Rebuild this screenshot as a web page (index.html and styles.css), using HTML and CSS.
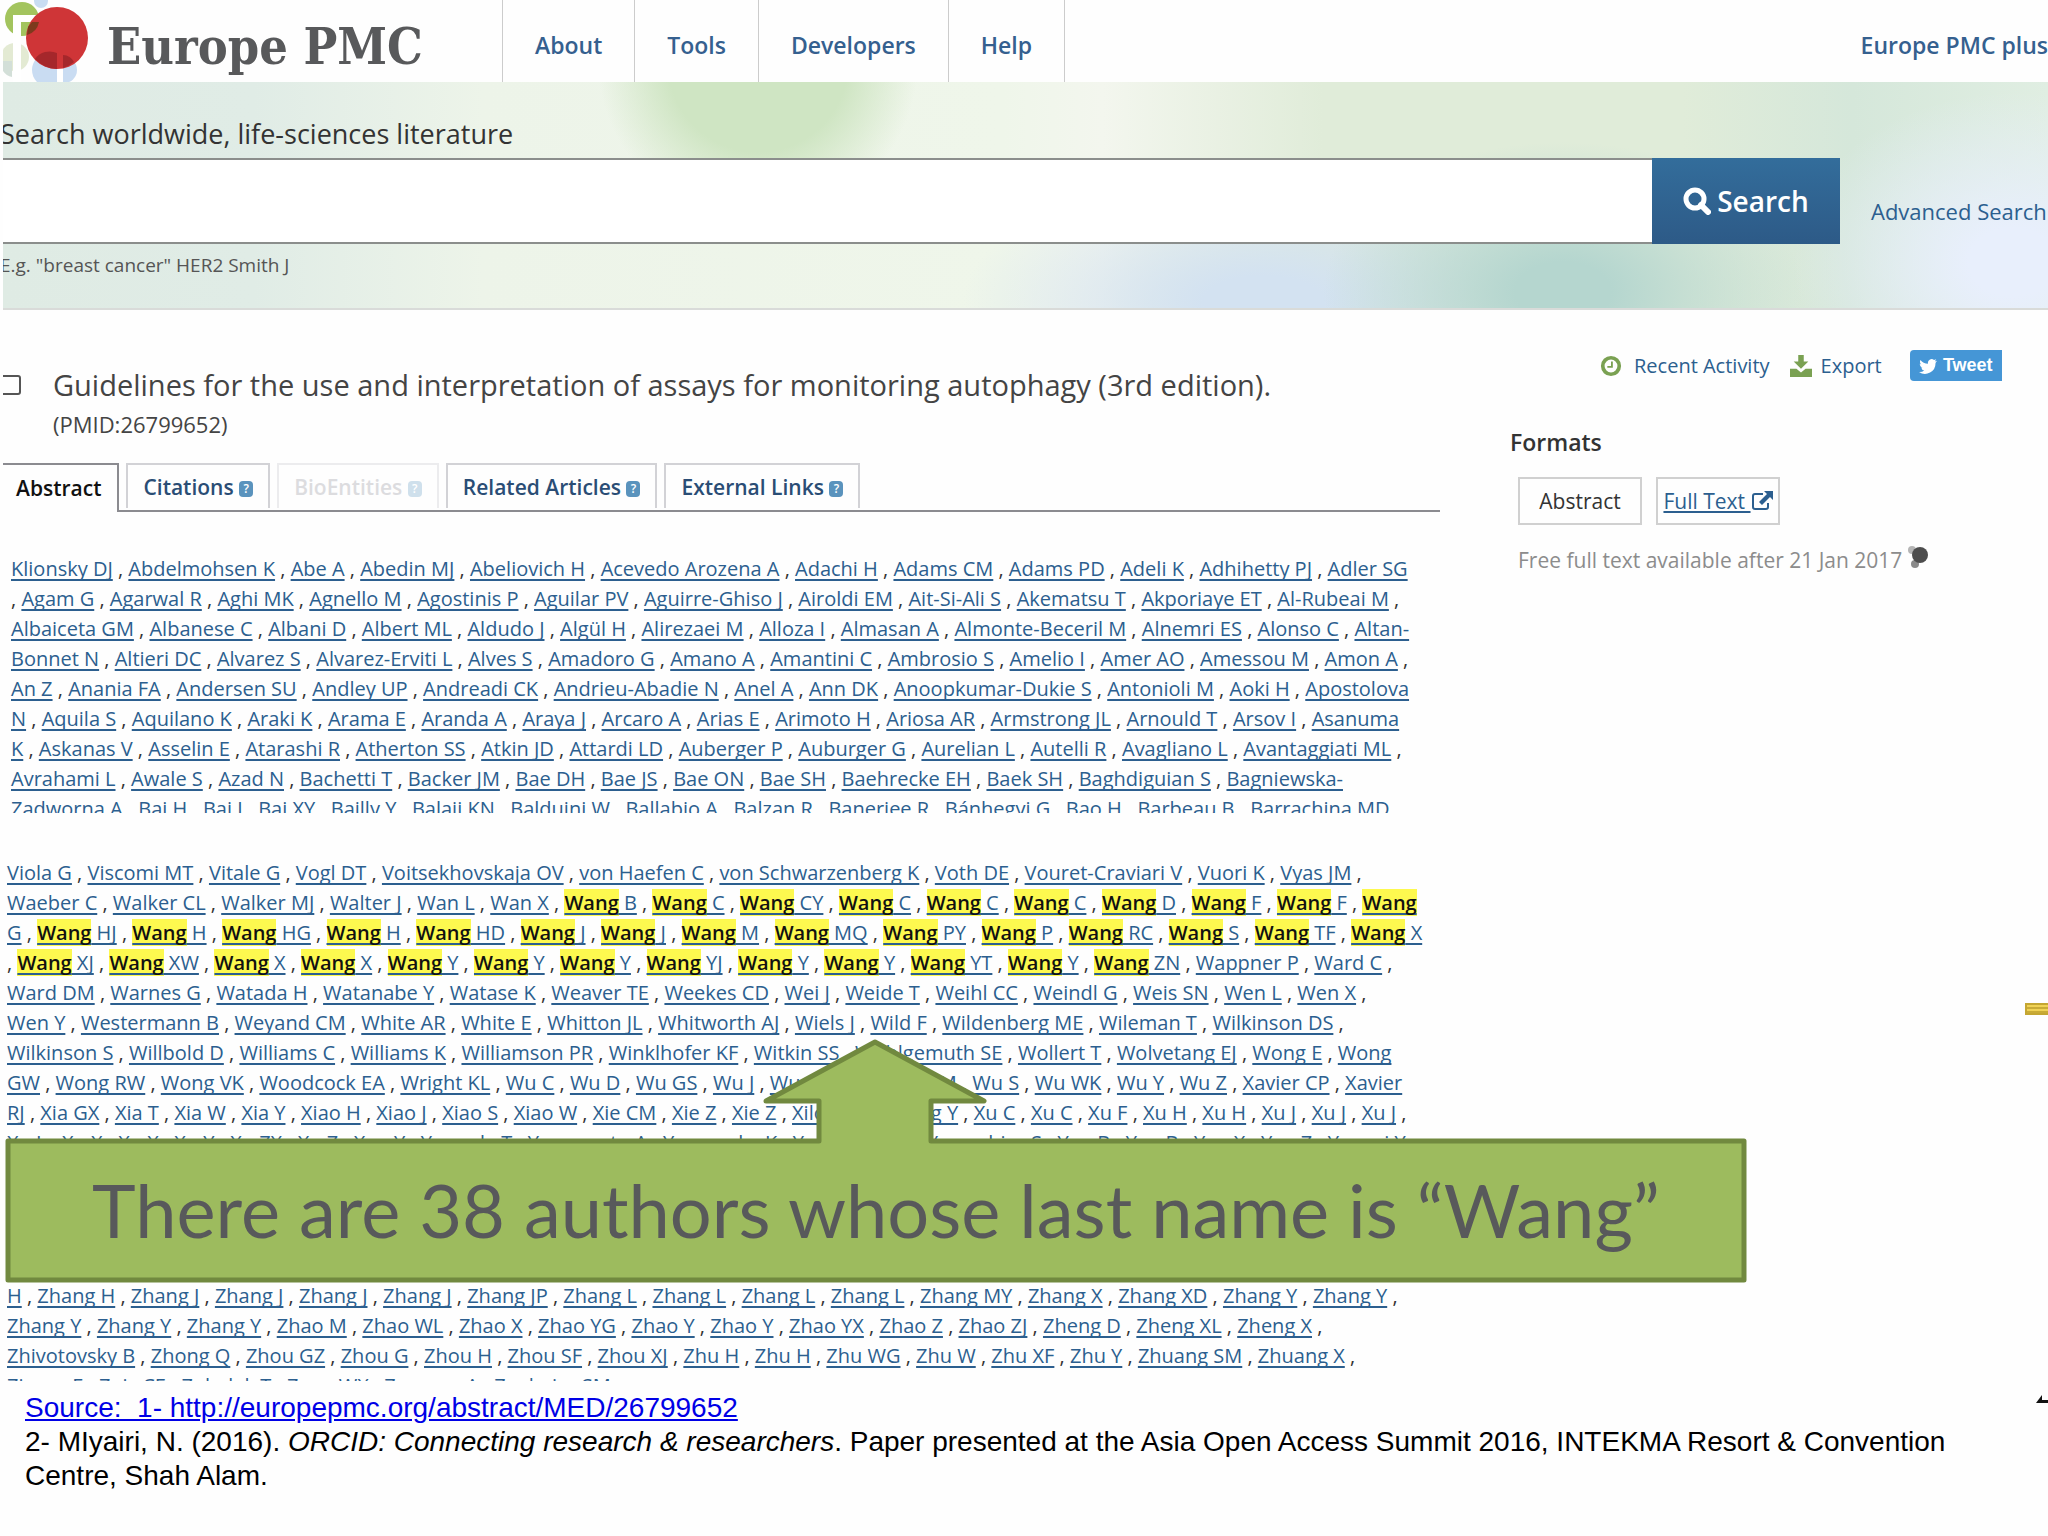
FILE: index.html
```html
<!DOCTYPE html>
<html lang="en">
<head>
  <meta charset="UTF-8">
  <meta name="viewport" content="width=device-width, initial-scale=1.0">
  <link rel="stylesheet" href="styles.css">
  <title>Europe PMC</title>
</head>
<body>
  <header class="topbar">
    <a class="brand" href="#">
      <svg class="logo" viewBox="0 0 88 82" aria-hidden="true">
        <circle cx="38" cy="1" r="7" fill="#c9ddf2"/>
        <circle cx="19" cy="19" r="17" fill="#a3c45e"/>
        <circle cx="12" cy="57" r="14" fill="#e3ead3"/>
        <path d="M0 61h9v16a14 14 0 0 1-9-6z" fill="#d3dfd8"/>
        <circle cx="46" cy="70" r="17" fill="#c9dcf2"/>
        <circle cx="61" cy="70" r="13" fill="#c9dcf2"/>
        <path d="M10 15h26v7H18v60h-8z" fill="#fff"/>
        <path d="M54 50h6v32h-6z" fill="#fff"/>
        <circle cx="54" cy="38" r="31" fill="#cf3537"/>
        <path d="M25 27l4-5h7a17 17 0 0 1-12 13z" fill="#7d3a1d"/>
        <path d="M32 59a18 18 0 0 1 22-6v16a31 31 0 0 1-22-10z" fill="#a5272b"/>
        <path d="M60 55a13 13 0 0 1 11 7 31 31 0 0 1-11 6z" fill="#a5272b"/>
      </svg>
      <span class="brand-name">Europe PMC</span>
    </a>
    <nav class="menu">
      <a href="#">About</a>
      <a href="#">Tools</a>
      <a href="#">Developers</a>
      <a href="#">Help</a>
    </nav>
    <a class="plus" href="#">Europe PMC plus</a>
  </header>

  <section class="banner">
    <form class="search">
      <label for="query">Search worldwide, life-sciences literature</label>
      <div class="search-row">
        <input type="text" id="query">
        <button type="submit">
          <svg viewBox="0 0 28 28" aria-hidden="true">
            <circle cx="12" cy="12" r="9" fill="none" stroke="#fff" stroke-width="5"/>
            <path d="M18 18l7 7" stroke="#fff" stroke-width="6" stroke-linecap="round"/>
          </svg>
          Search
        </button>
        <a href="#">Advanced Search</a>
      </div>
      <p class="hint">E.g. "breast cancer" HER2 Smith J</p>
    </form>
  </section>

  <main class="record">
    <article>
      <div class="title-row">
        <input type="checkbox" id="pick">
        <div>
          <label class="title" for="pick">Guidelines for the use and interpretation of assays for monitoring autophagy (3rd edition).</label>
          <p class="pmid">(PMID:26799652)</p>
        </div>
      </div>

      <nav class="tabs">
        <a class="tab active" href="#">Abstract</a>
        <a class="tab" href="#">Citations <span class="help">?</span></a>
        <a class="tab disabled" href="#">BioEntities <span class="help">?</span></a>
        <a class="tab" href="#">Related Articles <span class="help">?</span></a>
        <a class="tab" href="#">External Links <span class="help">?</span></a>
      </nav>

      <p class="authors first">
        <a href="#">Klionsky DJ</a> , <a href="#">Abdelmohsen K</a> , <a href="#">Abe A</a> , <a href="#">Abedin MJ</a> , <a href="#">Abeliovich H</a> , <a href="#">Acevedo Arozena A</a> , <a href="#">Adachi H</a> , <a href="#">Adams CM</a> , <a href="#">Adams PD</a> , <a href="#">Adeli K</a> , <a href="#">Adhihetty PJ</a> , <a href="#">Adler SG</a><br>
        , <a href="#">Agam G</a> , <a href="#">Agarwal R</a> , <a href="#">Aghi MK</a> , <a href="#">Agnello M</a> , <a href="#">Agostinis P</a> , <a href="#">Aguilar PV</a> , <a href="#">Aguirre-Ghiso J</a> , <a href="#">Airoldi EM</a> , <a href="#">Ait-Si-Ali S</a> , <a href="#">Akematsu T</a> , <a href="#">Akporiaye ET</a> , <a href="#">Al-Rubeai M</a> ,<br>
        <a href="#">Albaiceta GM</a> , <a href="#">Albanese C</a> , <a href="#">Albani D</a> , <a href="#">Albert ML</a> , <a href="#">Aldudo J</a> , <a href="#">Algül H</a> , <a href="#">Alirezaei M</a> , <a href="#">Alloza I</a> , <a href="#">Almasan A</a> , <a href="#">Almonte-Beceril M</a> , <a href="#">Alnemri ES</a> , <a href="#">Alonso C</a> , <a href="#">Altan-<br>Bonnet N</a> , <a href="#">Altieri DC</a> , <a href="#">Alvarez S</a> , <a href="#">Alvarez-Erviti L</a> , <a href="#">Alves S</a> , <a href="#">Amadoro G</a> , <a href="#">Amano A</a> , <a href="#">Amantini C</a> , <a href="#">Ambrosio S</a> , <a href="#">Amelio I</a> , <a href="#">Amer AO</a> , <a href="#">Amessou M</a> , <a href="#">Amon A</a> ,<br>
        <a href="#">An Z</a> , <a href="#">Anania FA</a> , <a href="#">Andersen SU</a> , <a href="#">Andley UP</a> , <a href="#">Andreadi CK</a> , <a href="#">Andrieu-Abadie N</a> , <a href="#">Anel A</a> , <a href="#">Ann DK</a> , <a href="#">Anoopkumar-Dukie S</a> , <a href="#">Antonioli M</a> , <a href="#">Aoki H</a> , <a href="#">Apostolova<br>N</a> , <a href="#">Aquila S</a> , <a href="#">Aquilano K</a> , <a href="#">Araki K</a> , <a href="#">Arama E</a> , <a href="#">Aranda A</a> , <a href="#">Araya J</a> , <a href="#">Arcaro A</a> , <a href="#">Arias E</a> , <a href="#">Arimoto H</a> , <a href="#">Ariosa AR</a> , <a href="#">Armstrong JL</a> , <a href="#">Arnould T</a> , <a href="#">Arsov I</a> , <a href="#">Asanuma<br>K</a> , <a href="#">Askanas V</a> , <a href="#">Asselin E</a> , <a href="#">Atarashi R</a> , <a href="#">Atherton SS</a> , <a href="#">Atkin JD</a> , <a href="#">Attardi LD</a> , <a href="#">Auberger P</a> , <a href="#">Auburger G</a> , <a href="#">Aurelian L</a> , <a href="#">Autelli R</a> , <a href="#">Avagliano L</a> , <a href="#">Avantaggiati ML</a> ,<br>
        <a href="#">Avrahami L</a> , <a href="#">Awale S</a> , <a href="#">Azad N</a> , <a href="#">Bachetti T</a> , <a href="#">Backer JM</a> , <a href="#">Bae DH</a> , <a href="#">Bae JS</a> , <a href="#">Bae ON</a> , <a href="#">Bae SH</a> , <a href="#">Baehrecke EH</a> , <a href="#">Baek SH</a> , <a href="#">Baghdiguian S</a> , <a href="#">Bagniewska-<br>Zadworna A</a> , <a href="#">Bai H</a> , <a href="#">Bai J</a> , <a href="#">Bai XY</a> , <a href="#">Bailly Y</a> , <a href="#">Balaji KN</a> , <a href="#">Balduini W</a> , <a href="#">Ballabio A</a> , <a href="#">Balzan R</a> , <a href="#">Banerjee R</a> , <a href="#">Bánhegyi G</a> , <a href="#">Bao H</a> , <a href="#">Barbeau B</a> , <a href="#">Barrachina MD</a>
      </p>

      <div class="found">
        <p class="authors middle">
          <a href="#">Viola G</a> , <a href="#">Viscomi MT</a> , <a href="#">Vitale G</a> , <a href="#">Vogl DT</a> , <a href="#">Voitsekhovskaja OV</a> , <a href="#">von Haefen C</a> , <a href="#">von Schwarzenberg K</a> , <a href="#">Voth DE</a> , <a href="#">Vouret-Craviari V</a> , <a href="#">Vuori K</a> , <a href="#">Vyas JM</a> ,<br>
          <a href="#">Waeber C</a> , <a href="#">Walker CL</a> , <a href="#">Walker MJ</a> , <a href="#">Walter J</a> , <a href="#">Wan L</a> , <a href="#">Wan X</a> , <a href="#"><mark>Wang</mark> B</a> , <a href="#"><mark>Wang</mark> C</a> , <a href="#"><mark>Wang</mark> CY</a> , <a href="#"><mark>Wang</mark> C</a> , <a href="#"><mark>Wang</mark> C</a> , <a href="#"><mark>Wang</mark> C</a> , <a href="#"><mark>Wang</mark> D</a> , <a href="#"><mark>Wang</mark> F</a> , <a href="#"><mark>Wang</mark> F</a> , <a href="#"><mark>Wang</mark><br>G</a> , <a href="#"><mark>Wang</mark> HJ</a> , <a href="#"><mark>Wang</mark> H</a> , <a href="#"><mark>Wang</mark> HG</a> , <a href="#"><mark>Wang</mark> H</a> , <a href="#"><mark>Wang</mark> HD</a> , <a href="#"><mark>Wang</mark> J</a> , <a href="#"><mark>Wang</mark> J</a> , <a href="#"><mark>Wang</mark> M</a> , <a href="#"><mark>Wang</mark> MQ</a> , <a href="#"><mark>Wang</mark> PY</a> , <a href="#"><mark>Wang</mark> P</a> , <a href="#"><mark>Wang</mark> RC</a> , <a href="#"><mark>Wang</mark> S</a> , <a href="#"><mark>Wang</mark> TF</a> , <a href="#"><mark>Wang</mark> X</a><br>
          , <a href="#"><mark>Wang</mark> XJ</a> , <a href="#"><mark>Wang</mark> XW</a> , <a href="#"><mark>Wang</mark> X</a> , <a href="#"><mark>Wang</mark> X</a> , <a href="#"><mark>Wang</mark> Y</a> , <a href="#"><mark>Wang</mark> Y</a> , <a href="#"><mark>Wang</mark> Y</a> , <a href="#"><mark>Wang</mark> YJ</a> , <a href="#"><mark>Wang</mark> Y</a> , <a href="#"><mark>Wang</mark> Y</a> , <a href="#"><mark>Wang</mark> YT</a> , <a href="#"><mark>Wang</mark> Y</a> , <a href="#"><mark>Wang</mark> ZN</a> , <a href="#">Wappner P</a> , <a href="#">Ward C</a> ,<br>
          <a href="#">Ward DM</a> , <a href="#">Warnes G</a> , <a href="#">Watada H</a> , <a href="#">Watanabe Y</a> , <a href="#">Watase K</a> , <a href="#">Weaver TE</a> , <a href="#">Weekes CD</a> , <a href="#">Wei J</a> , <a href="#">Weide T</a> , <a href="#">Weihl CC</a> , <a href="#">Weindl G</a> , <a href="#">Weis SN</a> , <a href="#">Wen L</a> , <a href="#">Wen X</a> ,<br>
          <a href="#">Wen Y</a> , <a href="#">Westermann B</a> , <a href="#">Weyand CM</a> , <a href="#">White AR</a> , <a href="#">White E</a> , <a href="#">Whitton JL</a> , <a href="#">Whitworth AJ</a> , <a href="#">Wiels J</a> , <a href="#">Wild F</a> , <a href="#">Wildenberg ME</a> , <a href="#">Wileman T</a> , <a href="#">Wilkinson DS</a> ,<br>
          <a href="#">Wilkinson S</a> , <a href="#">Willbold D</a> , <a href="#">Williams C</a> , <a href="#">Williams K</a> , <a href="#">Williamson PR</a> , <a href="#">Winklhofer KF</a> , <a href="#">Witkin SS</a> , <a href="#">Wohlgemuth SE</a> , <a href="#">Wollert T</a> , <a href="#">Wolvetang EJ</a> , <a href="#">Wong E</a> , <a href="#">Wong<br>GW</a> , <a href="#">Wong RW</a> , <a href="#">Wong VK</a> , <a href="#">Woodcock EA</a> , <a href="#">Wright KL</a> , <a href="#">Wu C</a> , <a href="#">Wu D</a> , <a href="#">Wu GS</a> , <a href="#">Wu J</a> , <a href="#">Wu J</a> , <a href="#">Wu KK</a> , <a href="#">Wu M</a> , <a href="#">Wu S</a> , <a href="#">Wu WK</a> , <a href="#">Wu Y</a> , <a href="#">Wu Z</a> , <a href="#">Xavier CP</a> , <a href="#">Xavier<br>RJ</a> , <a href="#">Xia GX</a> , <a href="#">Xia T</a> , <a href="#">Xia W</a> , <a href="#">Xia Y</a> , <a href="#">Xiao H</a> , <a href="#">Xiao J</a> , <a href="#">Xiao S</a> , <a href="#">Xiao W</a> , <a href="#">Xie CM</a> , <a href="#">Xie Z</a> , <a href="#">Xie Z</a> , <a href="#">Xilouri M</a> , <a href="#">Xiong Y</a> , <a href="#">Xu C</a> , <a href="#">Xu C</a> , <a href="#">Xu F</a> , <a href="#">Xu H</a> , <a href="#">Xu H</a> , <a href="#">Xu J</a> , <a href="#">Xu J</a> , <a href="#">Xu J</a> ,<br>
          <a href="#">Xu L</a> , <a href="#">Xu X</a> , <a href="#">Xu X</a> , <a href="#">Xu Y</a> , <a href="#">Xu ZX</a> , <a href="#">Xu Z</a> , <a href="#">Xue Y</a> , <a href="#">Yamada T</a> , <a href="#">Yamamoto A</a> , <a href="#">Yamanaka K</a> , <a href="#">Yamashina S</a> , <a href="#">Yamashiro S</a> , <a href="#">Yan B</a> , <a href="#">Yan B</a> , <a href="#">Yan X</a> , <a href="#">Yen Z</a> , <a href="#">Yanagi Y</a>
        </p>

        <div class="callout">
          <svg viewBox="0 0 1742 244" preserveAspectRatio="none" aria-hidden="true">
            <path d="M3 102H814V62H761L870 3L979 62H926V102H1739V241H3Z"/>
          </svg>
          <p>There are 38 authors whose last name is “Wang”</p>
        </div>
      </div>

      <p class="authors last">
        <a href="#">H</a> , <a href="#">Zhang H</a> , <a href="#">Zhang J</a> , <a href="#">Zhang J</a> , <a href="#">Zhang J</a> , <a href="#">Zhang J</a> , <a href="#">Zhang JP</a> , <a href="#">Zhang L</a> , <a href="#">Zhang L</a> , <a href="#">Zhang L</a> , <a href="#">Zhang L</a> , <a href="#">Zhang MY</a> , <a href="#">Zhang X</a> , <a href="#">Zhang XD</a> , <a href="#">Zhang Y</a> , <a href="#">Zhang Y</a> ,<br>
        <a href="#">Zhang Y</a> , <a href="#">Zhang Y</a> , <a href="#">Zhang Y</a> , <a href="#">Zhao M</a> , <a href="#">Zhao WL</a> , <a href="#">Zhao X</a> , <a href="#">Zhao YG</a> , <a href="#">Zhao Y</a> , <a href="#">Zhao Y</a> , <a href="#">Zhao YX</a> , <a href="#">Zhao Z</a> , <a href="#">Zhao ZJ</a> , <a href="#">Zheng D</a> , <a href="#">Zheng XL</a> , <a href="#">Zheng X</a> ,<br>
        <a href="#">Zhivotovsky B</a> , <a href="#">Zhong Q</a> , <a href="#">Zhou GZ</a> , <a href="#">Zhou G</a> , <a href="#">Zhou H</a> , <a href="#">Zhou SF</a> , <a href="#">Zhou XJ</a> , <a href="#">Zhu H</a> , <a href="#">Zhu H</a> , <a href="#">Zhu WG</a> , <a href="#">Zhu W</a> , <a href="#">Zhu XF</a> , <a href="#">Zhu Y</a> , <a href="#">Zhuang SM</a> , <a href="#">Zhuang X</a> ,<br>
        <a href="#">Ziparo E</a> , <a href="#">Zois CE</a> , <a href="#">Zoladek T</a> , <a href="#">Zong WX</a> , <a href="#">Zorzano A</a> , <a href="#">Zughaier SM</a>
      </p>
    </article>

    <aside>
      <div class="actions">
        <a href="#">
          <svg viewBox="0 0 24 24" aria-hidden="true">
            <circle cx="12" cy="12" r="9" fill="none" stroke="#7aa152" stroke-width="4"/>
            <path d="M13 7v6H8" fill="none" stroke="#7aa152" stroke-width="2"/>
          </svg>
          <span>Recent Activity</span>
        </a>
        <a class="export" href="#">
          <svg viewBox="0 0 24 24" aria-hidden="true">
            <path d="M9 0h6v7h5l-8 8-8-8h5z" fill="#7aa152"/>
            <path d="M0 15h7l5 4 5-4h7v9H0z" fill="#7aa152"/>
          </svg>
          <span>Export</span>
        </a>
        <button class="tweet" type="button">
          <svg viewBox="0 0 24 24" aria-hidden="true">
            <path d="M24 5l-3 1 2-3-3 1a5 5 0 0 0-8 5C8 9 4 7 2 4a5 5 0 0 0 1 6l-2-1c0 3 2 5 4 5H3a5 5 0 0 0 4 4 10 10 0 0 1-7 2 14 14 0 0 0 22-12z" fill="#fff"/>
          </svg>
          Tweet
        </button>
      </div>

      <h2>Formats</h2>
      <div class="formats">
        <a class="format current" href="#">Abstract</a>
        <a class="format" href="#"><span>Full Text </span><svg viewBox="0 0 22 20" aria-hidden="true">
          <path d="M12 3H4Q2 3 2 5v11q0 2 2 2h11q2 0 2-2v-4" fill="none" stroke="#2c5f8f" stroke-width="2"/>
          <path d="M13 0h9v9l-3-3-8 8-3-3 8-8z" fill="#2c5f8f"/>
        </svg></a>
      </div>
      <p class="note">
        Free full text available after 21 Jan 2017
        <svg viewBox="0 0 20 22" aria-hidden="true">
          <circle cx="4" cy="4" r="4" fill="#b5b5b5"/>
          <circle cx="7" cy="18" r="4" fill="#8a8a8a"/>
          <circle cx="12" cy="9" r="8" fill="#4d4d4d"/>
        </svg>
      </p>
    </aside>
  </main>

  <footer class="sources">
    <a href="#">Source:&nbsp; 1- http://europepmc.org/abstract/MED/26799652</a>
    <p>2- MIyairi, N. (2016). <em>ORCID: Connecting research &amp; researchers</em>. Paper presented at the Asia Open Access Summit 2016, INTEKMA Resort &amp; Convention Centre, Shah Alam.</p>
  </footer>

  <div class="edge-bar"></div>
  <svg class="edge-mark" viewBox="0 0 12 8" aria-hidden="true">
    <path d="M0 8l3-4 3-4v5h6v3z" fill="#111"/>
  </svg>
</body>
</html>
```
FILE: styles.css
```css
* {
  box-sizing: border-box;
}

body {
  position: relative;
  margin: 0;
  min-height: 100vh;
  overflow-x: hidden;
  background-color: #fefefe;
  color: #333;
  font-family: "Open Sans", "Noto Sans", sans-serif;
  font-size: 20px;
}

p,
h2 {
  margin: 0;
}

a {
  color: #2c5f8f;
  text-decoration: none;
}

/* Top bar */
.topbar {
  display: flex;
  height: 82px;
  padding-left: 3px;
}

.brand {
  display: flex;
  align-items: center;
  width: 500px;
  gap: 16px;
  border-right: 1px solid #ccc;
}

.logo {
  width: 88px;
  height: 82px;
}

.brand-name {
  padding-top: 12px;
  color: #58595b;
  font-family: "DejaVu Serif Condensed", "DejaVu Serif", serif;
  font-size: 50px;
  font-weight: bold;
  line-height: 60px;
  white-space: nowrap;
}

.menu {
  display: flex;
}

.menu a {
  padding: 0 32px;
  border-right: 1px solid #ccc;
}

.menu a,
.plus {
  color: #35608f;
  font-size: 23px;
  font-weight: 600;
  line-height: 90px;
}

.plus {
  margin-left: auto;
  white-space: nowrap;
}

/* Search banner */
.banner {
  height: 228px;
  margin-left: 3px;
  overflow: hidden;
  border-bottom: 2px solid #d9dbd9;
  background:
    radial-gradient(circle at 755px -20px, #cfe5c3 0 90px, transparent 160px),
    radial-gradient(ellipse 240px 150px at 1560px 210px, #b5d6cf 20%, transparent),
    radial-gradient(ellipse 300px 130px at 1260px 220px, #d3e2f1 20%, transparent),
    radial-gradient(ellipse 220px 170px at 2010px 180px, #e8effc 20%, transparent),
    linear-gradient(90deg, #dfebe4 0, #e0ece6 250px, #edf4e9 480px, #eff6ea 1000px, #f3f6ee 1100px, #e0ecd9 1320px, #e0ecd9 1680px, #d5e7da 1850px, #e0eee2 100%);
}

.search {
  margin-left: -3px;
}

.search label {
  display: block;
  padding: 31px 0 3px;
  color: #333;
  font-size: 27px;
  line-height: 42px;
}

.search-row {
  display: flex;
  align-items: center;
}

.search-row input {
  flex: 1;
  height: 86px;
  border: 2px solid #8b8e8c;
  border-right: 0;
  background: #fff;
  font-size: 27px;
}

.search-row button {
  display: flex;
  align-items: center;
  justify-content: center;
  gap: 6px;
  width: 188px;
  height: 86px;
  border: 0;
  background: linear-gradient(#336d9b, #2d5a87);
  color: #fff;
  font-family: inherit;
  font-size: 28px;
  font-weight: 600;
}

.search-row button svg {
  width: 28px;
  height: 28px;
}

.search-row a {
  width: 208px;
  padding: 20px 0 0 31px;
  font-size: 22px;
  line-height: 30px;
  white-space: nowrap;
}

.hint {
  padding-top: 6px;
  color: #555;
  font-size: 19px;
  line-height: 30px;
}

/* Record */
.record {
  display: grid;
  grid-template-columns: minmax(0, 1fr) 538px;
  column-gap: 70px;
}

article {
  padding-left: 3px;
}

.title-row {
  display: flex;
  gap: 32px;
  height: 153px;
  padding-top: 55px;
  overflow: hidden;
}

.title-row input {
  flex: none;
  appearance: none;
  width: 24px;
  height: 20px;
  margin: 10px 0 0 -6px;
  border: 2px solid #555;
  border-radius: 3px;
}

.title {
  color: #444;
  font-size: 29px;
  line-height: 40px;
  white-space: nowrap;
}

.pmid {
  color: #444;
  font-size: 22px;
  line-height: 38px;
}

.tabs {
  display: flex;
  gap: 7px;
  height: 49px;
  border-bottom: 2px solid #8b8b90;
}

.tab {
  height: 45px;
  padding: 0 15px;
  border: 2px solid #d2d2d6;
  border-bottom: 0;
  color: #2a4d75;
  font-size: 21px;
  font-weight: 600;
  line-height: 44px;
  white-space: nowrap;
}

.tab.active {
  height: 49px;
  padding: 0 16px 0 13px;
  border-color: #8b8b90;
  border-left: 0;
  background: #fefefe;
  color: #111;
  line-height: 46px;
}

.tab.disabled {
  border-color: #ececee;
  color: #dcdcdf;
}

.help {
  display: inline-block;
  width: 14px;
  height: 16px;
  border-radius: 4px;
  background: #5a93bd;
  color: #fff;
  font-size: 12px;
  line-height: 16px;
  text-align: center;
  vertical-align: 2px;
}

.disabled .help {
  background: #cfe0ec;
}

.authors {
  overflow: hidden;
  font-size: 20px;
  line-height: 30px;
  white-space: nowrap;
}

.authors a {
  text-decoration: underline 2px;
  text-decoration-skip-ink: none;
  text-underline-offset: 3px;
}

.authors mark {
  background: #fdf94f;
  color: #111;
  font-weight: 600;
}

.first {
  height: 259px;
  margin-top: 42px;
  padding-left: 8px;
}

.found {
  position: relative;
  height: 423px;
  margin-top: 45px;
}

.middle {
  height: 284px;
}

.middle,
.last {
  padding-left: 4px;
}

.last {
  height: 100px;
}

.callout {
  position: absolute;
  left: 2px;
  bottom: -2px;
  width: 1742px;
  height: 244px;
}

.callout svg {
  position: absolute;
  width: 100%;
  height: 100%;
}

.callout path {
  fill: #9dbb5e;
  stroke: #71893f;
  stroke-width: 5;
  stroke-linejoin: round;
}

.callout p {
  position: relative;
  padding-top: 99px;
  color: #58595b;
  font-family: Lato, sans-serif;
  font-size: 74px;
  line-height: 144px;
  text-align: center;
  white-space: nowrap;
}

/* Right column */
.actions {
  display: flex;
  align-items: center;
  gap: 20px;
  padding: 40px 0 0 90px;
}

.actions a {
  display: flex;
  align-items: center;
  gap: 12px;
  font-size: 20px;
  line-height: 30px;
}

.actions .export {
  gap: 9px;
}

.actions svg {
  width: 22px;
  height: 22px;
}

.tweet {
  display: flex;
  align-items: center;
  justify-content: center;
  gap: 6px;
  width: 92px;
  height: 31px;
  margin-left: 8px;
  padding: 0;
  border: 0;
  border-radius: 4px 0 0 4px;
  background: #4596d6;
  color: #fff;
  font-family: "Liberation Sans", sans-serif;
  font-size: 18px;
  font-weight: bold;
}

.actions .tweet svg {
  width: 18px;
  height: 18px;
}

aside h2 {
  margin-top: 44px;
  color: #333;
  font-size: 23px;
  font-weight: 600;
  line-height: 34px;
}

.formats {
  display: flex;
  gap: 14px;
  padding: 18px 0 0 8px;
}

.format {
  display: flex;
  align-items: center;
  justify-content: center;
  width: 124px;
  height: 48px;
  border: 2px solid #d0d0d0;
  font-size: 21px;
}

.format span {
  white-space: pre;
  text-decoration: underline;
}

.format.current {
  color: #333;
}

.format svg {
  width: 22px;
  height: 20px;
}

.note {
  padding: 18px 0 0 8px;
  color: #8c8c8c;
  font-size: 21px;
  line-height: 34px;
}

.note svg {
  width: 20px;
  height: 22px;
}

/* Sources under the record */
.sources {
  padding: 10px 60px 0 25px;
  color: #000;
  font-family: "Liberation Sans", Arial, sans-serif;
  font-size: 28px;
  line-height: 34px;
}

.sources a {
  color: #0000e6;
  text-decoration: underline;
}

.edge-bar {
  position: absolute;
  top: 1003px;
  right: 0;
  width: 23px;
  height: 12px;
  border: 2px solid #c4a632;
  border-right: 0;
  background: repeating-linear-gradient(#f0d255 0 2px, #c9ab36 2px 4px);
}

.edge-mark {
  position: absolute;
  top: 1395px;
  right: 0;
  width: 12px;
  height: 8px;
}
```
